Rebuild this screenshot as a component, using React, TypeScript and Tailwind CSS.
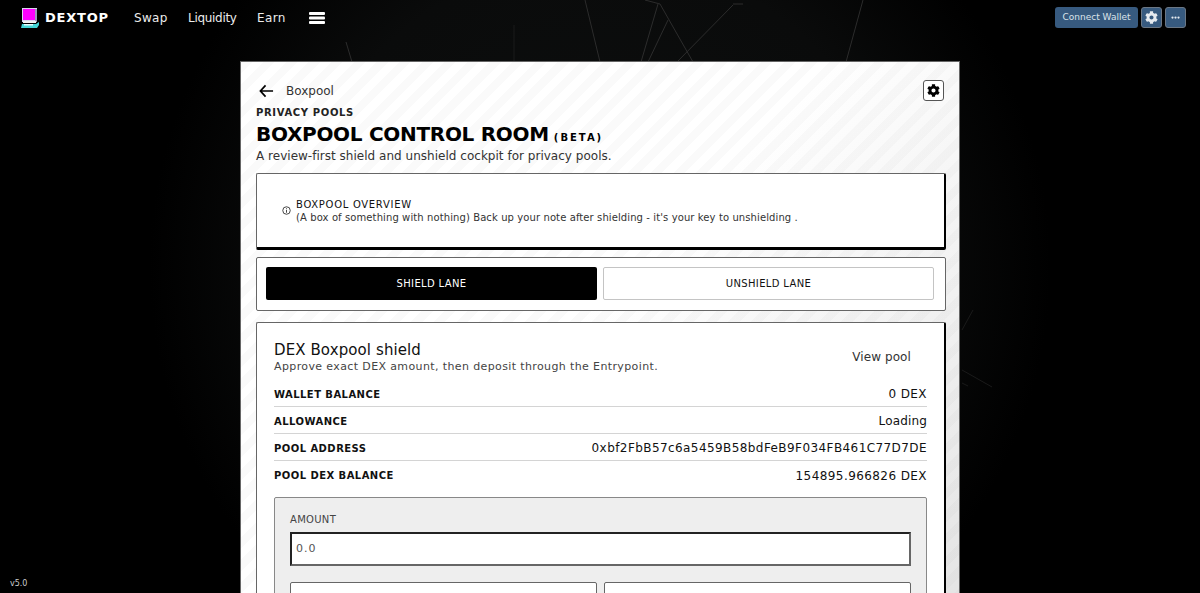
import React from "react";

const F = "font-['DejaVu_Sans',sans-serif]";

function Gear({ className }: { className?: string }) {
  return (
    <svg viewBox="0 0 512 512" className={className} fill="currentColor">
      <path d="M487.4 315.7l-42.6-24.6c4.3-23.2 4.3-47 0-70.2l42.6-24.6c4.9-2.8 7.1-8.6 5.5-14-11.1-35.6-30-67.8-54.7-94.6-3.8-4.1-10-5.1-14.8-2.3L380.8 110c-17.9-15.4-38.5-27.3-60.8-35.1V25.8c0-5.6-3.9-10.5-9.4-11.7-36.7-8.2-74.3-7.8-109.2 0-5.5 1.2-9.4 6.1-9.4 11.7V75c-22.2 7.9-42.8 19.8-60.8 35.1L88.7 85.5c-4.9-2.8-11-1.9-14.8 2.3-24.7 26.7-43.6 58.9-54.7 94.6-1.7 5.4.6 11.2 5.5 14L67.3 221c-4.3 23.2-4.3 47 0 70.2l-42.6 24.6c-4.9 2.8-7.1 8.6-5.5 14 11.1 35.6 30 67.8 54.7 94.6 3.8 4.1 10 5.1 14.8 2.3l42.6-24.6c17.9 15.4 38.5 27.3 60.8 35.1v49.2c0 5.6 3.9 10.5 9.4 11.7 36.7 8.2 74.3 7.8 109.2 0 5.5-1.2 9.4-6.1 9.4-11.7v-49.2c22.2-7.9 42.8-19.8 60.8-35.1l42.6 24.6c4.9 2.8 11 1.9 14.8-2.3 24.7-26.7 43.6-58.9 54.7-94.6 1.5-5.5-.7-11.3-5.6-14.1zM256 336c-44.1 0-80-35.9-80-80s35.9-80 80-80 80 35.9 80 80-35.9 80-80 80z" />
    </svg>
  );
}

function Row({ label, value, last, tight }: { label: string; value: string; last?: boolean; tight?: boolean }) {
  return (
    <div className={`flex h-[27px] items-center justify-between pt-[2px] ${last ? "" : "border-b border-[#d4d4d4]"}`}>
      <span className="text-[10px] font-semibold tracking-[0.45px] text-[#111]">{label}</span>
      <span className={`text-[12px] slashed-zero text-[#111] ${tight ? "tracking-[0.15px]" : "tracking-[0.42px]"}`}>{value}</span>
    </div>
  );
}

export default function App() {
  return (
    <div className={`relative h-[593px] overflow-hidden bg-black ${F}`}>
      <div className="absolute inset-0 bg-[radial-gradient(circle_at_50%_45%,#0d0f0f_0%,#0a0b0b_45%,#000_66%)]" />
      <svg className="absolute inset-0 h-full w-full" viewBox="0 0 1200 593" fill="none" stroke="#2c2c2c" strokeWidth="1">
        <path d="M585 0L600 62M658 4L641 62M645 0L660 4L693 62M733 5L677 62M668 20L648 62M733 4H743M863 0L846 62M346 42L352 62" />
        <path d="M514 25V62M962 330L973 310M962 370L992 387M962 383L968 386" stroke="#1a1a1a" />
      </svg>

      <header className="relative flex h-[35px] items-center justify-between pl-[20px] pr-[14px]">
        <div className="flex items-center text-white">
          <svg viewBox="0 0 20 22" className="h-[22px] w-[20px]">
            <rect x="2" y="1" width="15" height="14" fill="#d8d4ee" />
            <rect x="3" y="2" width="12" height="11" fill="#f0f" />
            <rect x="15" y="2" width="2" height="13" fill="#9a97b8" />
            <rect x="3" y="14" width="13" height="2" fill="#f2f2f2" />
            <path d="M1 21l1-4h14l3-2v3l-2 3z" fill="#45d6d6" />
            <rect x="4" y="17" width="9" height="1.5" fill="#e8ffff" />
          </svg>
          <span className="ml-[5px] w-[64px] text-[13px] font-semibold tracking-[0.8px]">DEXTOP</span>
          <nav className="ml-[25px] flex items-center text-[12px] text-[#ececec]">
            <span className="w-[34px] tracking-[0.3px]">Swap</span>
            <span className="ml-[20px] w-[49px] tracking-[-0.3px]">Liquidity</span>
            <span className="ml-[20px] w-[29px] tracking-[0.4px]">Earn</span>
            <svg viewBox="0 0 16 12" className="ml-[23px] h-[12px] w-[16px]" fill="#fff">
              <rect width="16" height="3" rx="1" />
              <rect y="4.5" width="16" height="3" rx="1" />
              <rect y="9" width="16" height="3" rx="1" />
            </svg>
          </nav>
        </div>
        <div className="flex items-center gap-[3px]">
          <div className="flex h-[21px] w-[83px] items-center justify-center rounded-[3px] bg-[#375a7f] pt-[1px] text-[9px] text-[#dbe3ea]">Connect Wallet</div>
          <div className="flex h-[21px] w-[21px] items-center justify-center rounded-[3px] border border-[#6b7785] bg-[#375a7f] text-[#e6ebf0]"><Gear className="h-[13px] w-[13px]" /></div>
          <div className="flex h-[21px] w-[21px] items-center justify-center rounded-[3px] border border-[#6b7785] bg-[#375a7f] text-[#e6ebf0]">
            <svg viewBox="0 0 12 4" className="w-[9px]" fill="currentColor"><circle cx="2" cy="2" r="1.5" /><circle cx="6" cy="2" r="1.5" /><circle cx="10" cy="2" r="1.5" /></svg>
          </div>
        </div>
      </header>

      <main className="relative ml-[240px] mt-[26px] h-[600px] w-[720px] border border-[#666] bg-white bg-[repeating-linear-gradient(135deg,rgba(0,0,0,0.018)_0px,rgba(0,0,0,0.018)_8px,transparent_8px,transparent_16px),linear-gradient(135deg,#ffffff_0%,#ffffff_45%,#e2e2e2_100%)] px-[15px]">
        <div className="flex h-[45px] items-start justify-between pt-[18px]">
          <div className="flex h-[21px] items-center">
            <svg viewBox="0 0 16 14" className="ml-[3px] h-[14px] w-[15px]" fill="none" stroke="#000" strokeWidth="1.8"><path d="M15 7H1.5M7 1L1.5 7L7 13" /></svg>
            <span className="ml-[12px] text-[12px] text-[#333]">Boxpool</span>
          </div>
          <div className="flex h-[21px] w-[21px] items-center justify-center rounded-[3px] border border-[#555] bg-white text-black"><Gear className="h-[13px] w-[13px]" /></div>
        </div>
        <div className="text-[10px] font-semibold leading-[12px] tracking-[0.65px] text-[#222]">PRIVACY POOLS</div>
        <div className="flex h-[30px] items-baseline">
          <span className="text-[20px] font-bold leading-[30px] tracking-[-0.3px] text-black">BOXPOOL CONTROL ROOM</span>
          <span className="ml-[5px] text-[10px] font-bold tracking-[2px] text-black">(BETA)</span>
        </div>
        <div className="text-[12px] leading-[14px] tracking-[0.02px] text-[#333]">A review-first shield and unshield cockpit for privacy pools.</div>

        <section className="mt-[10px] flex h-[77px] w-[690px] items-center rounded-[2px] border border-[#666] border-b-[3px] border-r-[2px] border-b-black border-r-black bg-white pl-[25px]">
          <svg viewBox="0 0 12 12" className="h-[9px] w-[9px]" fill="none" stroke="#222" strokeWidth="1.1"><circle cx="6" cy="6" r="5" /><path d="M6 5.2V9M6 3v1.2" /></svg>
          <div className="ml-[5px]">
            <div className="text-[10px] leading-[13px] tracking-[0.7px] text-[#111]">BOXPOOL OVERVIEW</div>
            <div className="text-[10px] leading-[13px] tracking-[0.1px] text-[#333]">(A box of something with nothing) Back up your note after shielding - it&apos;s your key to unshielding .</div>
          </div>
        </section>

        <section className="mt-[7px] flex h-[54px] w-[690px] items-start gap-[6px] rounded-[2px] border border-[#666] bg-white pl-[9px] pt-[9px]">
          <div className="flex h-[33px] w-[331px] items-center justify-center rounded-[2px] bg-black text-[10px] tracking-[0.35px] text-white">SHIELD LANE</div>
          <div className="flex h-[33px] w-[331px] items-center justify-center rounded-[2px] border border-[#c4c4c4] bg-white text-[10px] tracking-[0.35px] text-[#111]">UNSHIELD LANE</div>
        </section>

        <section className="mt-[11px] h-[300px] w-[690px] rounded-[2px] border border-[#666] border-r-[2px] border-r-black bg-white px-[17px]">
          <div className="relative pt-[19px]">
            <div className="text-[15px] leading-[17px] tracking-[0.1px] text-[#111]">DEX Boxpool shield</div>
            <div className="text-[11px] leading-[15px] tracking-[0.38px] text-[#444]">Approve exact DEX amount, then deposit through the Entrypoint.</div>
            <span className="absolute right-[16px] top-[25px] text-[12px] tracking-[0.1px] text-[#333]">View pool</span>
          </div>
          <div className="mt-[6px]">
            <Row label="WALLET BALANCE" value="0 DEX" />
            <Row label="ALLOWANCE" value="Loading" tight />
            <Row label="POOL ADDRESS" value="0xbf2FbB57c6a5459B58bdFeB9F034FB461C77D7DE" />
            <Row label="POOL DEX BALANCE" value="154895.966826 DEX" last />
          </div>
          <div className="mt-[9px] h-[120px] rounded-[2px] border border-[#888] bg-[#eeeeee] px-[15px] pt-[16px]">
            <div className="text-[10px] leading-[12px] tracking-[0.3px] text-[#444]">AMOUNT</div>
            <div className="mt-[6px] flex h-[34px] items-center border-2 border-[#222] border-b-[#666] border-r-[#666] bg-white pl-[4px] pt-[1px] text-[11px] tracking-[1px] text-[#555] slashed-zero">0.0</div>
            <div className="mt-[16px] grid grid-cols-2 gap-[7px]">
              <div className="h-[34px] rounded-[2px] border border-[#666] bg-white" />
              <div className="h-[34px] rounded-[2px] border border-[#666] bg-white" />
            </div>
          </div>
        </section>
      </main>

      <div className="absolute bottom-[3px] left-[10px] text-[8px] font-medium text-[#ccc]">v5.0</div>
    </div>
  );
}
